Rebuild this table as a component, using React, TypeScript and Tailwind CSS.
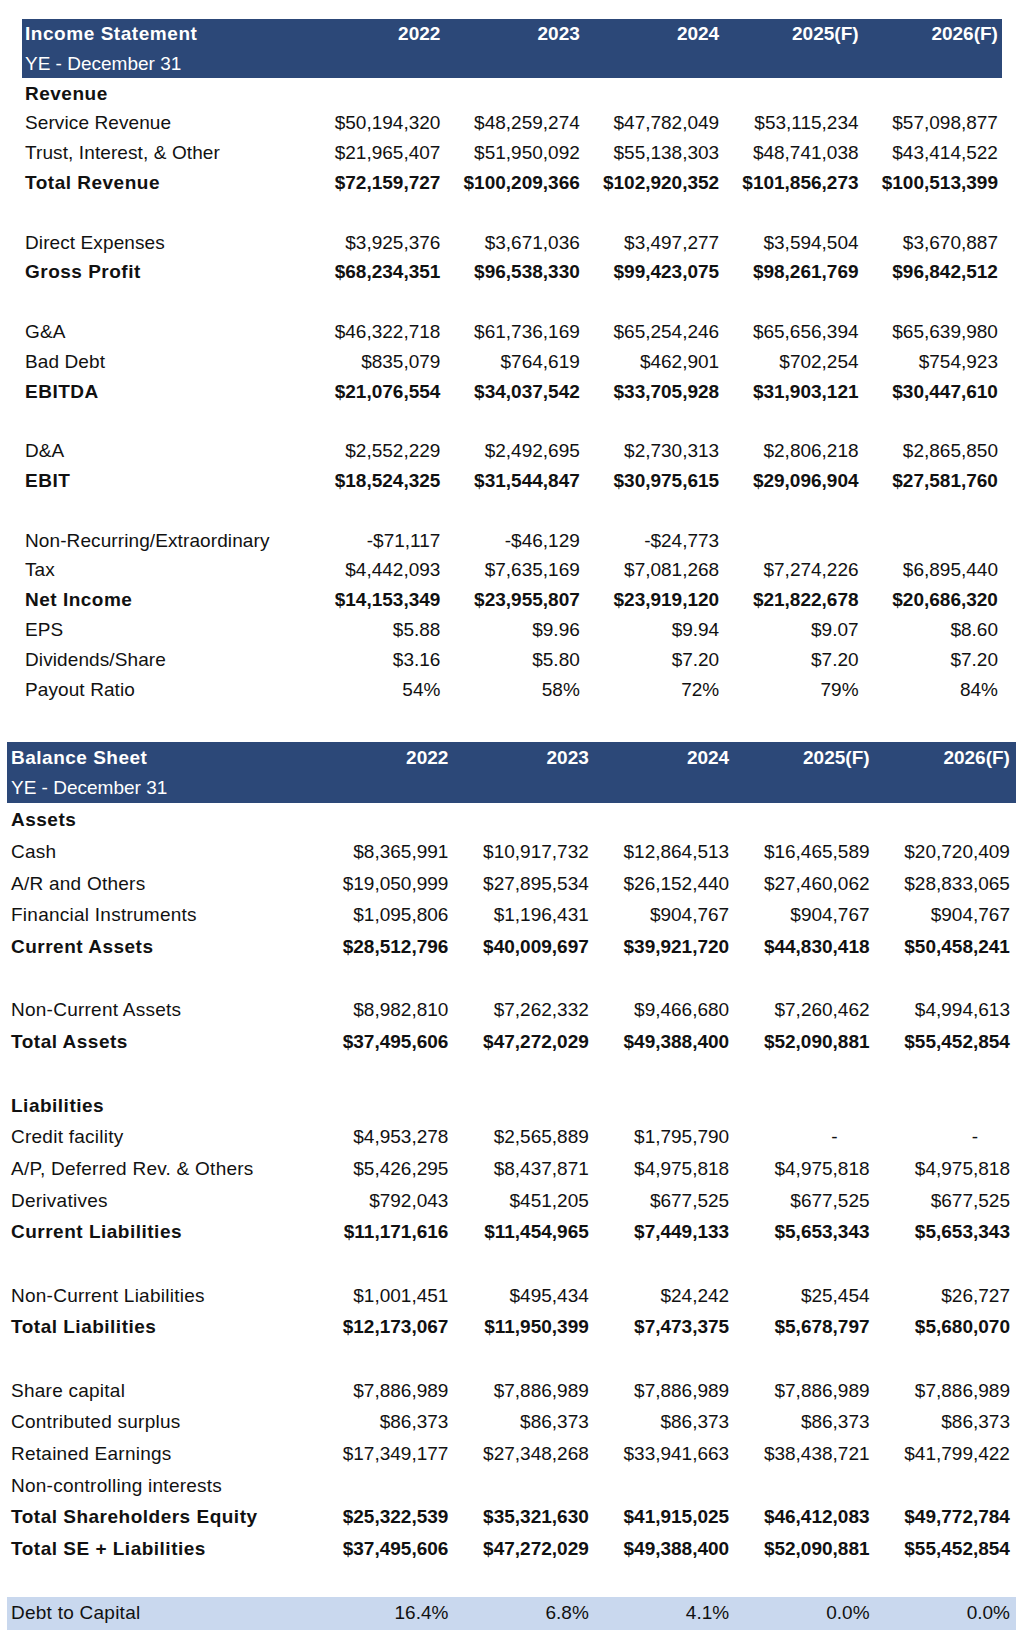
import React from "react";

type Row = { label: string; values?: string[]; bold?: boolean; band?: boolean };

const income: Row[] = [
  { label: "Revenue", bold: true },
  { label: "Service Revenue", values: ["$50,194,320", "$48,259,274", "$47,782,049", "$53,115,234", "$57,098,877"] },
  { label: "Trust, Interest, & Other", values: ["$21,965,407", "$51,950,092", "$55,138,303", "$48,741,038", "$43,414,522"] },
  { label: "Total Revenue", bold: true, values: ["$72,159,727", "$100,209,366", "$102,920,352", "$101,856,273", "$100,513,399"] },
  { label: "" },
  { label: "Direct Expenses", values: ["$3,925,376", "$3,671,036", "$3,497,277", "$3,594,504", "$3,670,887"] },
  { label: "Gross Profit", bold: true, values: ["$68,234,351", "$96,538,330", "$99,423,075", "$98,261,769", "$96,842,512"] },
  { label: "" },
  { label: "G&A", values: ["$46,322,718", "$61,736,169", "$65,254,246", "$65,656,394", "$65,639,980"] },
  { label: "Bad Debt", values: ["$835,079", "$764,619", "$462,901", "$702,254", "$754,923"] },
  { label: "EBITDA", bold: true, values: ["$21,076,554", "$34,037,542", "$33,705,928", "$31,903,121", "$30,447,610"] },
  { label: "" },
  { label: "D&A", values: ["$2,552,229", "$2,492,695", "$2,730,313", "$2,806,218", "$2,865,850"] },
  { label: "EBIT", bold: true, values: ["$18,524,325", "$31,544,847", "$30,975,615", "$29,096,904", "$27,581,760"] },
  { label: "" },
  { label: "Non-Recurring/Extraordinary", values: ["-$71,117", "-$46,129", "-$24,773", "", ""] },
  { label: "Tax", values: ["$4,442,093", "$7,635,169", "$7,081,268", "$7,274,226", "$6,895,440"] },
  { label: "Net Income", bold: true, values: ["$14,153,349", "$23,955,807", "$23,919,120", "$21,822,678", "$20,686,320"] },
  { label: "EPS", values: ["$5.88", "$9.96", "$9.94", "$9.07", "$8.60"] },
  { label: "Dividends/Share", values: ["$3.16", "$5.80", "$7.20", "$7.20", "$7.20"] },
  { label: "Payout Ratio", values: ["54%", "58%", "72%", "79%", "84%"] },
];

const balance: Row[] = [
  { label: "Assets", bold: true },
  { label: "Cash", values: ["$8,365,991", "$10,917,732", "$12,864,513", "$16,465,589", "$20,720,409"] },
  { label: "A/R and Others", values: ["$19,050,999", "$27,895,534", "$26,152,440", "$27,460,062", "$28,833,065"] },
  { label: "Financial Instruments", values: ["$1,095,806", "$1,196,431", "$904,767", "$904,767", "$904,767"] },
  { label: "Current Assets", bold: true, values: ["$28,512,796", "$40,009,697", "$39,921,720", "$44,830,418", "$50,458,241"] },
  { label: "" },
  { label: "Non-Current Assets", values: ["$8,982,810", "$7,262,332", "$9,466,680", "$7,260,462", "$4,994,613"] },
  { label: "Total Assets", bold: true, values: ["$37,495,606", "$47,272,029", "$49,388,400", "$52,090,881", "$55,452,854"] },
  { label: "" },
  { label: "Liabilities", bold: true },
  { label: "Credit facility", values: ["$4,953,278", "$2,565,889", "$1,795,790", "-", "-"] },
  { label: "A/P, Deferred Rev. & Others", values: ["$5,426,295", "$8,437,871", "$4,975,818", "$4,975,818", "$4,975,818"] },
  { label: "Derivatives", values: ["$792,043", "$451,205", "$677,525", "$677,525", "$677,525"] },
  { label: "Current Liabilities", bold: true, values: ["$11,171,616", "$11,454,965", "$7,449,133", "$5,653,343", "$5,653,343"] },
  { label: "" },
  { label: "Non-Current Liabilities", values: ["$1,001,451", "$495,434", "$24,242", "$25,454", "$26,727"] },
  { label: "Total Liabilities", bold: true, values: ["$12,173,067", "$11,950,399", "$7,473,375", "$5,678,797", "$5,680,070"] },
  { label: "" },
  { label: "Share capital", values: ["$7,886,989", "$7,886,989", "$7,886,989", "$7,886,989", "$7,886,989"] },
  { label: "Contributed surplus", values: ["$86,373", "$86,373", "$86,373", "$86,373", "$86,373"] },
  { label: "Retained Earnings", values: ["$17,349,177", "$27,348,268", "$33,941,663", "$38,438,721", "$41,799,422"] },
  { label: "Non-controlling interests" },
  { label: "Total Shareholders Equity", bold: true, values: ["$25,322,539", "$35,321,630", "$41,915,025", "$46,412,083", "$49,772,784"] },
  { label: "Total SE + Liabilities", bold: true, values: ["$37,495,606", "$47,272,029", "$49,388,400", "$52,090,881", "$55,452,854"] },
  { label: "" },
  { label: "Debt to Capital", band: true, values: ["16.4%", "6.8%", "4.1%", "0.0%", "0.0%"] },
];

const years = ["2022", "2023", "2024", "2025(F)", "2026(F)"];

export default function App() {
  return (
    <div
      className="w-[1036px] h-[1650px] bg-white text-[#111] overflow-hidden"
      style={{ fontFamily: '"Liberation Sans", Arial, sans-serif' }}
    >
      {/* Income Statement */}
      <div className="ml-[22px] pt-[19px] w-[980px] text-[19px]">
        <div className="bg-[#2c4878] text-white h-[59px] grid grid-cols-[283px_repeat(5,139.4px)] grid-rows-[30px_29px]">
          <div className="pl-[3px] font-bold tracking-[0.55px] leading-[30px]">Income Statement</div>
          {years.map((y) => (
            <div key={y} className="pr-[4px] text-right font-bold leading-[30px]">
              {y}
            </div>
          ))}
          <div className="pl-[3px] leading-[29px]">YE - December 31</div>
          <div className="col-span-5" />
        </div>
        <div className="mt-[1px]">
          {income.map((r, i) => (
            <div key={i} className="grid grid-cols-[283px_repeat(5,139.4px)] h-[29.8px] items-center">
              <div className={"pl-[3px] whitespace-nowrap " + (r.bold ? "font-bold tracking-[0.5px]" : "tracking-[0.1px]")}>
                {r.label}
              </div>
              {(r.values ?? ["", "", "", "", ""]).map((v, j) => (
                <div key={j} className={"pr-[4px] text-right whitespace-nowrap " + (r.bold ? "font-bold" : "")}>
                  {v}
                </div>
              ))}
            </div>
          ))}
        </div>
      </div>

      {/* Balance Sheet */}
      <div className="ml-[7px] mt-[37px] w-[1009px] text-[19px]">
        <div className="bg-[#2c4878] text-white h-[61px] grid grid-cols-[307px_repeat(5,140.4px)] grid-rows-[31px_30px]">
          <div className="pl-[4px] font-bold tracking-[0.5px] leading-[31px]">Balance Sheet</div>
          {years.map((y) => (
            <div key={y} className="pr-[6px] text-right font-bold leading-[31px]">
              {y}
            </div>
          ))}
          <div className="pl-[4px] leading-[30px]">YE - December 31</div>
          <div className="col-span-5" />
        </div>
        <div className="mt-[2px]">
          {balance.map((r, i) => (
            <div
              key={i}
              className={
                "grid grid-cols-[307px_repeat(5,140.4px)] items-center " +
                (r.band ? "h-[33px] bg-[#c9d8ee]" : "h-[31.7px]")
              }
            >
              <div className={"pl-[4px] whitespace-nowrap " + (r.bold ? "font-bold tracking-[0.5px]" : "tracking-[0.25px]")}>
                {r.label}
              </div>
              {(r.values ?? ["", "", "", "", ""]).map((v, j) => (
                <div
                  key={j}
                  className={
                    "text-right whitespace-nowrap " +
                    (v === "-" ? "pr-[38px] " : "pr-[6px] ") +
                    (r.bold ? "font-bold" : "")
                  }
                >
                  {v}
                </div>
              ))}
            </div>
          ))}
        </div>
      </div>
    </div>
  );
}
